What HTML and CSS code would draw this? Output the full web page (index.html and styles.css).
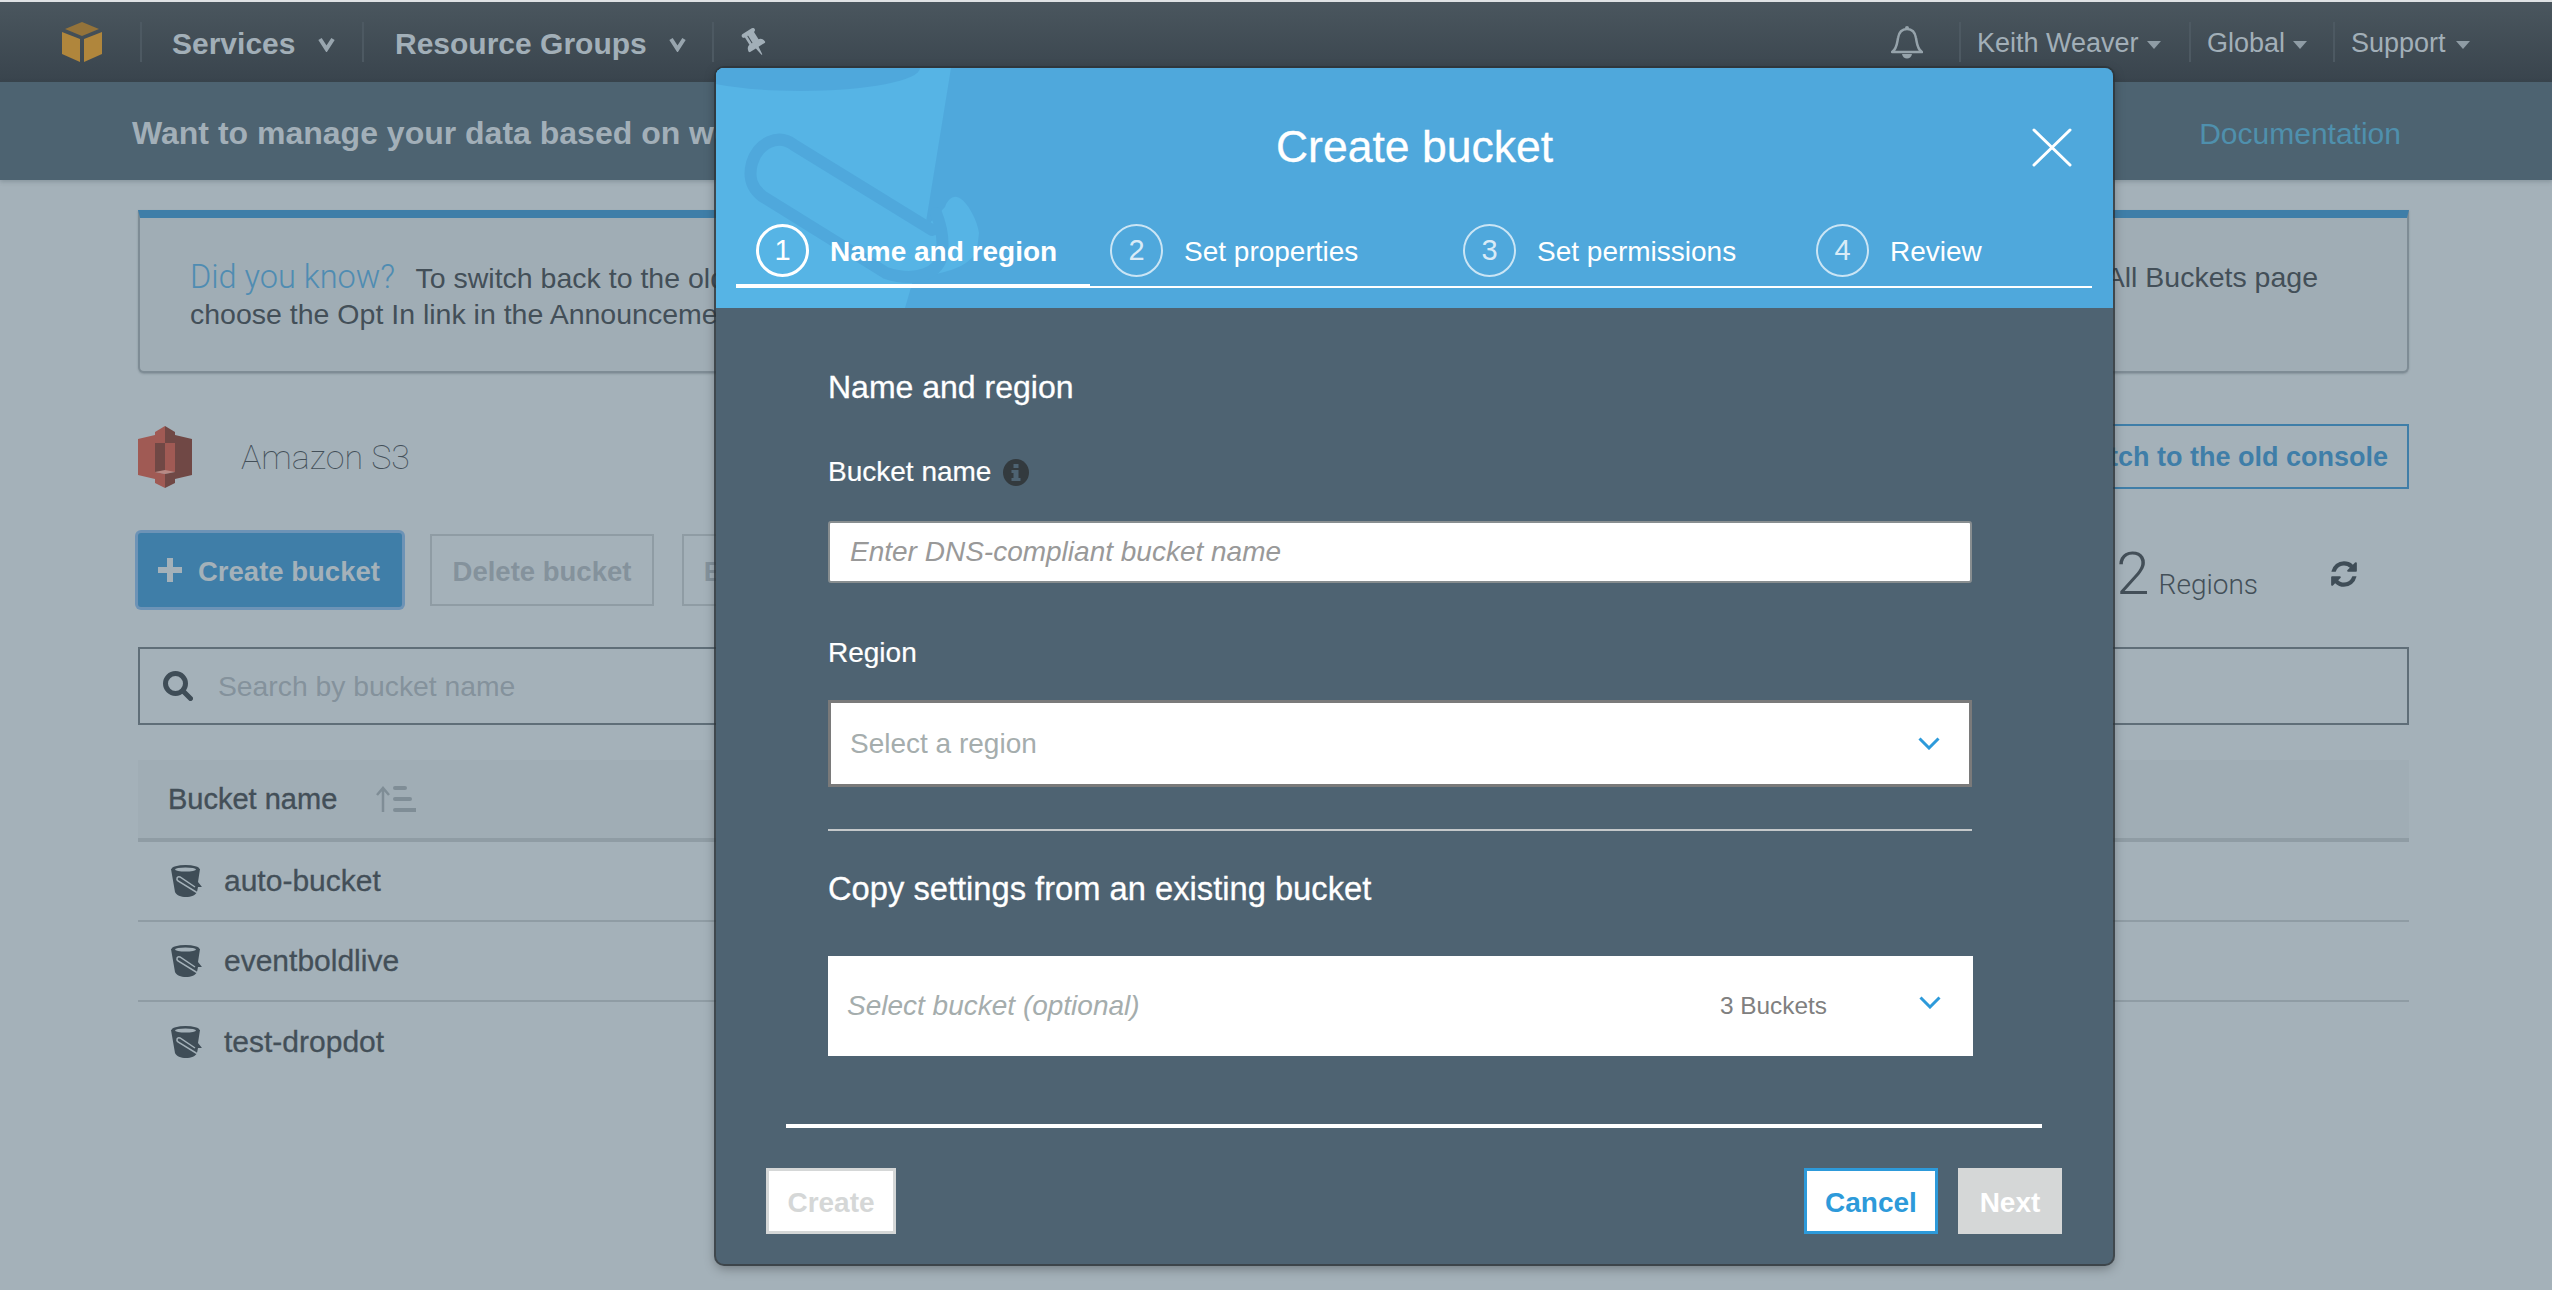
FILE: index.html
```html
<!DOCTYPE html>
<html lang="en">

<head>
  <meta charset="UTF-8">
  <meta name="viewport" content="width=device-width, initial-scale=1.0">
  <link rel="stylesheet" href="styles.css">
  <title>S3 Management Console</title>
</head>

<body>
  <svg class="defs" width="0" height="0">
    <symbol id="bucket" viewBox="0 0 32 32">
      <path d="M0 4 L4 27 C5 30 10 32 15 32 C20 32 25 30 26 27 L27 22 L31 22 L27 17 L29 4 Z" fill="#3f4d57" />
      <ellipse cx="14.500" cy="4" rx="14" ry="4" fill="#3f4d57" />
      <ellipse cx="14.500" cy="4.500" rx="10.500" ry="2" fill="#a4b1b9" />
      <path d="M24 22 L9 12 C6 11 5 14 7 16 L25 27 C29 28 31 26 30 22" fill="none" stroke="#a4b1b9" stroke-width="1.500" />
    </symbol>
    <symbol id="chevron" viewBox="0 0 22 13">
      <path d="M1.500 1.500 L11 11 L20.500 1.500" fill="none" stroke="#2d9ada" stroke-width="3" />
    </symbol>
    <symbol id="caret" viewBox="0 0 14 8">
      <path d="M0 0 H14 L7 8 Z" fill="#8f9ca5" />
    </symbol>
    <symbol id="vee" viewBox="0 0 17 15">
      <path d="M2 2 L8.500 12 L15 2" fill="none" stroke="#98a5ae" stroke-width="4" />
    </symbol>
  </svg>

  <header class="topbar">
    <svg class="aws-logo" viewBox="0 0 40 40">
      <path d="M0 10 L18 17 V40 L0 32 Z" fill="#b0863c" />
      <path d="M40 10 L22 17 V40 L40 32 Z" fill="#b0863c" />
      <path d="M20 0 L37 7 L20 14 L3 7 Z" fill="#94733a" />
    </svg>
    <div class="nav-item nav-services">Services <svg class="vee"><use href="#vee" /></svg></div>
    <div class="nav-item nav-groups">Resource Groups <svg class="vee"><use href="#vee" /></svg></div>
    <div class="nav-item nav-pin">
      <svg class="pin" viewBox="0 0 1152 1792">
        <g transform="rotate(-32 576 896)">
          <path d="M480 864v-448q0-14-9-23t-23-9-23 9-9 23v448q0 14 9 23t23 9 23-9 9-23zm672 352q0 26-19 45t-45 19h-429l-51 483q-2 12-10.500 20.500t-20.500 8.500h-1q-27 0-32-27l-76-485h-404q-26 0-45-19t-19-45q0-123 78.500-221.500t177.500-98.500v-512q-52 0-90-38t-38-90 38-90 90-38h640q52 0 90 38t38 90-38 90-90 38v512q99 0 177.500 98.500t78.500 221.500z" fill="#a2afb8" />
        </g>
      </svg>
    </div>
    <div class="topbar-right">
      <svg class="bell" viewBox="0 0 32 34">
        <path d="M1 27 C6 24 6 18 7 13 C8 7 11 4 16 4 C21 4 24 7 25 13 C26 18 26 24 31 27 Z" fill="none" stroke="#96a3ab" stroke-width="2.500" stroke-linejoin="round" />
        <circle cx="16" cy="3" r="2" fill="#96a3ab" />
        <path d="M11 29 C12 35 20 35 21 29 Z" fill="#96a3ab" />
      </svg>
      <div class="nav-item nav-user">Keith Weaver <svg class="caret"><use href="#caret" /></svg></div>
      <div class="nav-item nav-global">Global <svg class="caret"><use href="#caret" /></svg></div>
      <div class="nav-item nav-support">Support <svg class="caret"><use href="#caret" /></svg></div>
    </div>
  </header>

  <div class="subbar">
    <span class="subbar-text">Want to manage your data based on workflows?</span>
    <a class="subbar-link">Documentation</a>
  </div>

  <main class="content">
    <section class="notice">
      <div class="notice-line">
        <p><span class="notice-lead">Did you know?</span> To switch back to the old</p>
        <p>All Buckets page</p>
      </div>
      <p>choose the Opt In link in the Announcements panel</p>
    </section>

    <div class="title-row">
      <svg class="s3-logo" viewBox="0 0 54 62">
        <path d="M0 13 L17 9 V53 L0 49 Z" fill="#a05a54" />
        <path d="M54 13 L37 9 V53 L54 49 Z" fill="#704845" />
        <path d="M17 6 L27 0 V17 L17 17 Z" fill="#a05a54" />
        <path d="M37 6 L27 0 V17 L37 17 Z" fill="#704845" />
        <path d="M17 17 H27 V46 H17 Z" fill="#704845" />
        <path d="M27 17 H37 V46 H27 Z" fill="#a05a54" />
        <path d="M17 46 L27 44 L37 46 L27 48 Z" fill="#b98a85" />
        <path d="M17 46 L27 48 V62 L17 57 Z" fill="#a05a54" />
        <path d="M37 46 L27 48 V62 L37 57 Z" fill="#704845" />
      </svg>
      <h1 class="service-name">Amazon S3</h1>
      <button class="btn-outline">Switch to the old console</button>
    </div>

    <div class="toolbar">
      <button class="btn-primary"><span class="plus"></span>Create bucket</button>
      <button class="btn-disabled">Delete bucket</button>
      <button class="btn-disabled btn-empty">Empty bucket</button>
      <div class="regions"><span class="regions-count">2</span><span class="regions-label">Regions</span></div>
      <svg class="refresh" viewBox="0 0 1792 1792">
        <path d="M1639 1056q0 5-1 7-64 268-268 434.500t-478 166.500q-146 0-282.500-55t-243.500-157l-129 129q-19 19-45 19t-45-19-19-45v-448q0-26 19-45t45-19h448q26 0 45 19t19 45-19 45l-137 137q71 66 161 102t187 36q134 0 250-65t186-179q11-17 53-117 8-23 30-23h192q13 0 22.500 9.500t9.500 22.500zm25-800v448q0 26-19 45t-45 19h-448q-26 0-45-19t-19-45 19-45l138-138q-148-137-349-137-134 0-250 65t-186 179q-11 17-53 117-8 23-30 23h-199q-13 0-22.500-9.500t-9.500-22.500v-7q65-268 270-434.500t480-166.500q146 0 284 55.500t245 156.500l130-129q19-19 45-19t45 19 19 45z" fill="#3f4d57" />
      </svg>
    </div>

    <div class="search">
      <svg class="search-icon" viewBox="0 0 30 30">
        <circle cx="12.500" cy="12.500" r="10" fill="none" stroke="#3f4d57" stroke-width="5" />
        <path d="M20 20 L27.500 27.500" stroke="#3f4d57" stroke-width="5" stroke-linecap="round" />
      </svg>
      <span>Search by bucket name</span>
    </div>

    <div class="table">
      <div class="table-head">
        <span>Bucket name</span>
        <svg class="sort" viewBox="0 0 40 26">
          <path d="M7 26 V3 M1 9 L7 2 L13 9" fill="none" stroke="#7f8d96" stroke-width="2.500" />
          <path d="M19 2 H29 M19 13 H34 M19 24 H40" stroke="#7f8d96" stroke-width="4" stroke-linecap="round" />
        </svg>
      </div>
      <div class="table-row"><svg class="bucket"><use href="#bucket" /></svg>auto-bucket</div>
      <div class="table-row"><svg class="bucket"><use href="#bucket" /></svg>eventboldlive</div>
      <div class="table-row"><svg class="bucket"><use href="#bucket" /></svg>test-dropdot</div>
    </div>
  </main>

  <div class="modal">
    <div class="modal-head">
      <svg class="modal-art" width="300" height="240" viewBox="0 0 300 240">
        <path d="M0 0 H235 L209 160 L229 139 C232 130 238 128 241 129 C252 132 262 155 263 165 L261 182 C255 195 240 205 198 209 L189 240 H0 Z" fill="#56b4e5" />
        <ellipse cx="85" cy="0" rx="119" ry="23" fill="#4fa8dc" />
        <path d="M216 162 L78 77 C62 65 42 75 36 95 C32 110 36 120 46 128 L170 205 C200 215 225 205 226 185 C228 170 224 155 220 145" fill="none" stroke="#4fa8dc" stroke-width="12" stroke-linecap="round" />
      </svg>
      <h2 class="modal-title">Create bucket</h2>
      <svg class="modal-close" viewBox="0 0 40 39">
        <path d="M2 2 L38 37 M38 2 L2 37" stroke="#fff" stroke-width="3" stroke-linecap="round" />
      </svg>
      <div class="steps">
        <div class="step step-active"><span class="step-num">1</span><span>Name and region</span></div>
        <div class="step"><span class="step-num">2</span><span>Set properties</span></div>
        <div class="step"><span class="step-num">3</span><span>Set permissions</span></div>
        <div class="step step-last"><span class="step-num">4</span><span>Review</span></div>
      </div>
    </div>

    <div class="modal-form">
      <h3 class="form-title">Name and region</h3>
      <label class="form-label label-bucket">Bucket name
        <svg class="info" viewBox="0 0 26 27">
          <ellipse cx="13" cy="13.500" rx="13" ry="13.500" fill="#333a3e" />
          <rect x="10.500" y="5" width="5" height="4" fill="#4e6372" />
          <path d="M8.500 11 H15.500 V19 H17.500 V22 H8.500 V19 H10.500 V14 H8.500 Z" fill="#4e6372" />
        </svg>
      </label>
      <div class="text-field">Enter DNS-compliant bucket name</div>
      <label class="form-label label-region">Region</label>
      <div class="select-field">
        <span>Select a region</span>
        <svg class="chevron"><use href="#chevron" /></svg>
      </div>
      <div class="form-rule"></div>
      <h3 class="form-title title-copy">Copy settings from an existing bucket</h3>
      <div class="copy-field">
        <span class="copy-hint">Select bucket (optional)</span>
        <span class="copy-count">3 Buckets</span>
        <svg class="chevron"><use href="#chevron" /></svg>
      </div>
    </div>

    <div class="modal-rule"></div>
    <div class="modal-foot">
      <button class="foot-create">Create</button>
      <button class="foot-cancel">Cancel</button>
      <button class="foot-next">Next</button>
    </div>
  </div>
</body>

</html>
```

FILE: styles.css
```css
body {
  font-family: "Liberation Sans", Arial, sans-serif;
  background-color: #a4b1b9;
  color: #434f58;
  margin: 0;
  height: 1290px;
  overflow: hidden;
  position: relative;
}

p,
h1,
h2,
h3 {
  margin: 0;
  font-weight: normal;
}

button {
  font-family: inherit;
  cursor: pointer;
  box-sizing: border-box;
  border-radius: 0;
  padding: 0;
}

.defs {
  position: absolute;
}

/* top navigation */
.topbar {
  height: 80px;
  border-top: 2px solid #dfe2e4;
  background: linear-gradient(#4a565e, #39444d);
  display: flex;
  align-items: center;
  padding-left: 62px;
  color: #a2afb8;
}

.aws-logo {
  width: 40px;
  height: 40px;
  margin-right: 38px;
}

.nav-item {
  height: 40px;
  border-left: 2px solid #4d5962;
  padding-top: 3px;
  display: flex;
  align-items: center;
  white-space: pre;
  box-sizing: border-box;
}

.nav-services,
.nav-groups {
  font-size: 30px;
  font-weight: bold;
}

.nav-services {
  padding-left: 30px;
  width: 222px;
}

.nav-groups {
  padding-left: 31px;
  width: 350px;
}

.vee {
  width: 17px;
  height: 15px;
  margin-left: 14px;
  margin-top: 2px;
}

.nav-pin {
  padding-left: 27px;
  padding-top: 0;
}

.pin {
  width: 26px;
  height: 30px;
}

.topbar-right {
  margin-left: auto;
  display: flex;
  align-items: center;
  padding-right: 82px;
  font-size: 27px;
}

.bell {
  width: 32px;
  height: 34px;
  margin-right: 36px;
}

.caret {
  width: 14px;
  height: 8px;
  margin-left: 1px;
  margin-top: 2px;
}

.nav-user {
  width: 230px;
  padding-left: 16px;
}

.nav-global {
  width: 144px;
  padding-left: 16px;
}

.nav-support {
  padding-left: 16px;
}

.nav-support .caret {
  margin-left: 3px;
}

.subbar {
  height: 98px;
  background-color: #4d6371;
  box-shadow: 0 2px 4px rgba(60, 75, 85, 0.25);
  display: flex;
  align-items: center;
  justify-content: space-between;
  padding: 5px 151px 0 132px;
  box-sizing: border-box;
}

.subbar-text {
  font-size: 32px;
  font-weight: bold;
  color: #a2afb8;
}

.subbar-link {
  font-size: 30px;
  color: #4f90ad;
}

/* page behind the dialog */
.content {
  padding: 30px 143px 0 138px;
}

.notice {
  height: 163px;
  box-sizing: border-box;
  background-color: #a0adb5;
  border: 2px solid #7e8c95;
  border-top: 8px solid #3f7ea8;
  border-radius: 0 0 6px 6px;
  padding: 41px 89px 0 50px;
  font-size: 28.500px;
  line-height: 36px;
  box-shadow: 0 1px 2px rgba(60, 75, 85, 0.3);
}

.notice-line {
  display: flex;
  justify-content: space-between;
}

.notice-lead {
  font-family: Roboto, sans-serif;
  font-weight: 300;
  font-size: 32.500px;
  color: #4f8cb2;
  margin-right: 13px;
}

.title-row {
  height: 65px;
  margin-top: 51px;
  display: flex;
  align-items: center;
}

.s3-logo {
  width: 54px;
  height: 62px;
}

.service-name {
  font-family: Roboto, sans-serif;
  font-weight: 100;
  font-size: 34px;
  margin-left: 49px;
}

.btn-outline {
  margin-left: auto;
  height: 65px;
  width: 420px;
  background: none;
  border: 2px solid #3f7ea8;
  color: #3f7ea8;
  font-size: 27px;
  font-weight: bold;
  text-align: right;
  padding: 2px 19px 0 0;
}

.toolbar {
  height: 74px;
  margin-top: 44px;
  display: flex;
  align-items: center;
}

.btn-primary {
  width: 264px;
  height: 74px;
  background-color: #3f7ea8;
  border: none;
  border-radius: 3px;
  box-shadow: 0 0 0 3px #6d93b6;
  color: #a4b1b9;
  font-size: 27.500px;
  font-weight: bold;
  display: flex;
  align-items: center;
  padding: 3px 0 0 20px;
  margin-right: 28px;
}

.plus {
  width: 24px;
  height: 24px;
  margin: -3px 16px 0 0;
  background:
    linear-gradient(#a4b1b9, #a4b1b9) center / 100% 6px no-repeat,
    linear-gradient(#a4b1b9, #a4b1b9) center / 6px 100% no-repeat;
}

.btn-disabled {
  width: 224px;
  height: 72px;
  background: none;
  border: 2px solid #8f9ca4;
  color: #84929c;
  font-size: 27.500px;
  font-weight: bold;
  padding-top: 3px;
  margin-right: 28px;
}

.regions {
  margin-left: auto;
  padding-top: 6px;
  display: flex;
  align-items: baseline;
  font-family: Roboto, sans-serif;
  font-weight: 300;
}

.regions-count {
  font-size: 60px;
  margin-right: 9px;
}

.regions-label {
  font-size: 28px;
}

.refresh {
  width: 30px;
  height: 30px;
  margin: 8px 50px 0 71px;
}

.search {
  height: 78px;
  margin-top: 40px;
  box-sizing: border-box;
  border: 2px solid #5f6e78;
  display: flex;
  align-items: center;
  padding-left: 23px;
  font-size: 28.300px;
  color: #84929c;
}

.search-icon {
  width: 30px;
  height: 30px;
  margin-right: 25px;
}

.table {
  margin-top: 35px;
}

.table-head {
  height: 82px;
  box-sizing: border-box;
  background-color: #a0adb5;
  border-bottom: 4px solid #8f9ca4;
  display: flex;
  align-items: center;
  padding-left: 30px;
  font-size: 29px;
  -webkit-text-stroke: 0.400px #434f58;
}

.sort {
  width: 40px;
  height: 26px;
  margin-left: 39px;
}

.table-row {
  height: 80px;
  box-sizing: border-box;
  border-bottom: 2px solid #8f9ca4;
  display: flex;
  align-items: center;
  padding-left: 33px;
  font-size: 30px;
  -webkit-text-stroke: 0.300px #434f58;
}

.table-row:last-child {
  border-bottom: none;
}

.bucket {
  width: 32px;
  height: 32px;
  margin-right: 21px;
}

/* create bucket dialog */
.modal {
  position: absolute;
  left: 716px;
  top: 68px;
  width: 1397px;
  height: 1196px;
  background-color: #4e6372;
  border-radius: 8px;
  box-shadow: 0 0 0 2px rgba(45, 52, 58, 0.8), 0 4px 12px rgba(0, 0, 0, 0.35);
  color: #fff;
}

.modal-head {
  height: 240px;
  box-sizing: border-box;
  padding-top: 52px;
  background-color: #4fa8dc;
  border-radius: 8px 8px 0 0;
  position: relative;
  overflow: hidden;
}

.modal-art {
  position: absolute;
  left: 0;
  top: 0;
}

.modal-title {
  position: relative;
  font-size: 44.500px;
  line-height: 54px;
  text-align: center;
  -webkit-text-stroke: 0.300px #fff;
}

.modal-close {
  position: absolute;
  left: 1316px;
  top: 60px;
  width: 40px;
  height: 39px;
}

.steps {
  position: relative;
  display: flex;
  align-items: flex-start;
  height: 64px;
  box-sizing: border-box;
  margin: 50px 21px 0 20px;
  border-bottom: 2px solid #fff;
  font-size: 28px;
}

.step {
  width: 353px;
  height: 62px;
  box-sizing: border-box;
  padding-left: 20px;
  display: flex;
  gap: 21px;
  line-height: 56px;
}

.step-active {
  width: 354px;
  height: 64px;
  border-bottom: 4px solid #fff;
  font-weight: bold;
}

.step-last {
  width: 296px;
}

.step-num {
  width: 53px;
  height: 53px;
  box-sizing: border-box;
  border: 2px solid rgba(255, 255, 255, 0.7);
  border-radius: 50%;
  text-align: center;
  font-size: 29px;
  font-weight: normal;
  line-height: 49px;
  color: rgba(255, 255, 255, 0.8);
}

.step-active .step-num {
  border: 3px solid #fff;
  line-height: 47px;
  color: #fff;
}

.modal-form {
  margin: 0 141px 0 112px;
  padding-top: 59px;
}

.form-title {
  font-size: 32px;
  line-height: 40px;
  -webkit-text-stroke: 0.300px #fff;
}

.form-label {
  display: flex;
  align-items: center;
  font-size: 28px;
  line-height: 36px;
  -webkit-text-stroke: 0.200px #fff;
}

.label-bucket {
  margin-top: 47px;
}

.info {
  width: 26px;
  height: 27px;
  margin-left: 12px;
}

.text-field {
  height: 62px;
  margin-top: 31px;
  box-sizing: border-box;
  background-color: #fff;
  border: 2px solid #888e90;
  border-radius: 3px;
  padding-left: 20px;
  font-size: 28px;
  font-style: italic;
  line-height: 58px;
  color: #999;
}

.label-region {
  margin-top: 52px;
}

.select-field {
  height: 87px;
  margin-top: 29px;
  box-sizing: border-box;
  background-color: #fff;
  border: 3px solid #7a7a7a;
  display: flex;
  align-items: center;
  justify-content: space-between;
  padding: 0 29px 0 19px;
  font-size: 28px;
  color: #a5adad;
}

.chevron {
  width: 22px;
  height: 13px;
}

.form-rule {
  height: 2px;
  margin-top: 42px;
  background-color: #c4c8ca;
}

.title-copy {
  margin-top: 38px;
  font-size: 32.700px;
}

.copy-field {
  height: 100px;
  margin-top: 47px;
  margin-right: -1px;
  background-color: #fff;
  display: flex;
  align-items: center;
  padding: 0 32px 0 19px;
}

.copy-hint {
  font-size: 28px;
  font-style: italic;
  color: #a5adad;
}

.copy-count {
  margin-left: auto;
  margin-right: 92px;
  font-size: 24.400px;
  color: #808080;
}

.copy-field .chevron {
  margin-top: -8px;
}

.modal-rule {
  height: 4px;
  margin: 68px 71px 0 70px;
  background-color: #fff;
}

.modal-foot {
  display: flex;
  margin-top: 40px;
  padding: 0 51px 0 50px;
  gap: 20px;
}

.modal-foot button {
  height: 66px;
  font-size: 28px;
  font-weight: bold;
  padding-top: 3px;
}

.foot-create {
  width: 130px;
  margin-right: auto;
  background-color: #fff;
  border: 3px solid #d5d7d7;
  color: #d5d7d7;
}

.foot-cancel {
  width: 134px;
  background-color: #fff;
  border: 3px solid #2d9ada;
  color: #2d9ada;
}

.foot-next {
  width: 104px;
  background-color: #d5d7d7;
  border: none;
  color: #fff;
}
```
